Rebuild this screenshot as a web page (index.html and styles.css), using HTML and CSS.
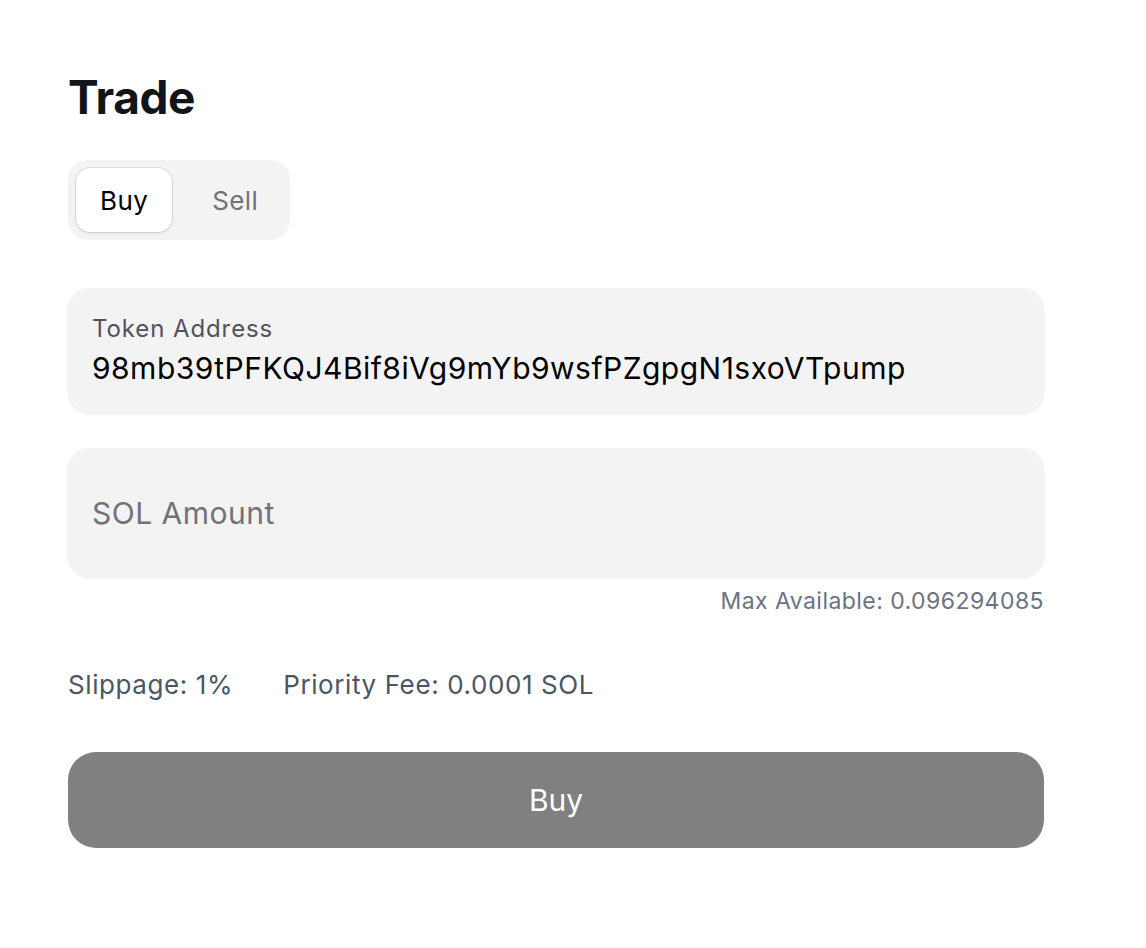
FILE: index.html
```html
<!DOCTYPE html>
<html lang="en">
<head>
<meta charset="utf-8">
<title>Trade</title>
<link rel="stylesheet" href="styles.css">
</head>
<body>
<main class="trade">
  <h1 class="title">Trade</h1>
  <div class="toggle">
    <button class="toggle-btn active">Buy</button>
    <button class="toggle-btn">Sell</button>
  </div>
  <div class="field field-token">
    <div class="field-label">Token Address</div>
    <div class="field-value">98mb39tPFKQJ4Bif8iVg9mYb9wsfPZgpgN1sxoVTpump</div>
  </div>
  <div class="field field-amount">
    <div class="placeholder">SOL Amount</div>
  </div>
  <div class="max">Max Available: 0.096294085</div>
  <div class="meta">
    <span>Slippage: 1%</span>
    <span>Priority Fee: 0.0001 SOL</span>
  </div>
  <button class="submit">Buy</button>
</main>
</body>
</html>
```

FILE: styles.css
```css
* { box-sizing: border-box; }
html, body { margin: 0; padding: 0; background: #ffffff; }
body {
  font-family: Inter, "Noto Sans", "Liberation Sans", sans-serif;
  color: #111827;
}
.trade {
  width: 976px;
  margin-left: 68px;
  padding-top: 68px;
  display: flex;
  flex-direction: column;
}
.title {
  margin: 0;
  font-size: 46px;
  font-weight: 700;
  line-height: 58px;
  color: #111418;
  letter-spacing: -0.5px;
}
.toggle {
  margin-top: 34px;
  align-self: flex-start;
  display: flex;
  padding: 8px;
  gap: 16px;
  background: #f3f3f3;
  border-radius: 20px;
}
.toggle-btn {
  font-family: inherit;
  font-size: 26px;
  letter-spacing: 0.4px;
  border: none;
  background: transparent;
  color: #71717a;
  height: 64px;
  padding: 0 24px;
  border-radius: 14px;
  cursor: pointer;
}
.toggle-btn.active {
  background: #ffffff;
  color: #000000;
  box-shadow: 0 0 0 1px rgba(0,0,0,0.08), 0 1px 3px rgba(0,0,0,0.12);
}
.field {
  background: #f3f3f3;
  border-radius: 22px;
  padding: 0 24px;
  box-shadow: 0 1px 3px rgba(0,0,0,0.08);
  display: flex;
  flex-direction: column;
  justify-content: center;
}
.field-token {
  margin-top: 48px;
  height: 125px;
  gap: 4px;
}
.field-label {
  font-size: 24px;
  letter-spacing: 0.9px;
  color: #52525b;
  line-height: 30px;
}
.field-value {
  font-size: 30px;
  letter-spacing: 0.48px;
  color: #000000;
  line-height: 40px;
}
.field-amount {
  margin-top: 35px;
  height: 129px;
}
.placeholder {
  font-size: 30px;
  letter-spacing: 0.5px;
  color: #71717a;
}
.max {
  margin-top: 9px;
  text-align: right;
  font-size: 23px;
  letter-spacing: 0.45px;
  line-height: 30px;
  color: #6b7280;
}
.meta {
  margin-top: 52px;
  display: flex;
  gap: 50px;
  font-size: 26px;
  letter-spacing: 0.6px;
  line-height: 34px;
  color: #4b5563;
}
.submit {
  margin-top: 50px;
  height: 96px;
  border: none;
  border-radius: 28px;
  background: #808080;
  color: #ffffff;
  font-family: inherit;
  font-size: 30px;
  cursor: pointer;
}
```
